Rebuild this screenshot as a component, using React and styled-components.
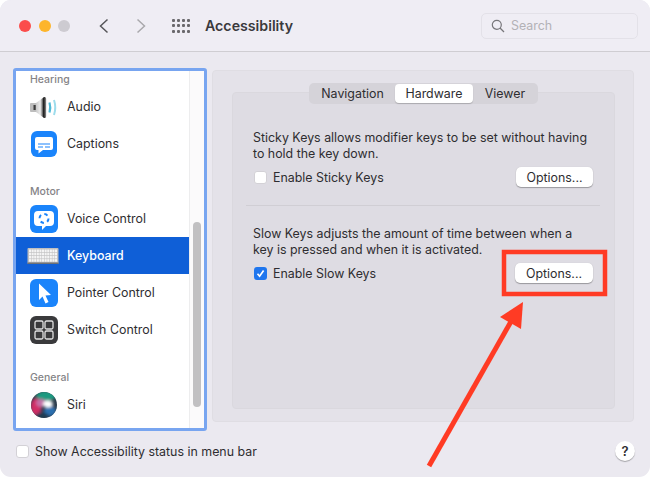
import React from "react";
import styled, { createGlobalStyle } from "styled-components";

const GlobalStyle = createGlobalStyle`
  html, body { margin: 0; padding: 0; background: #fff; }
  body { font-family: Inter, "Liberation Sans", sans-serif; }
`;

const MacWindow = styled.div`
  position: relative;
  width: 650px;
  height: 477px;
  background: #ebe9f0;
  border-radius: 11px;
  overflow: hidden;
  color: #2e2d30;
  font-size: 12.4px;
`;

const TitleBar = styled.header`
  display: flex;
  align-items: center;
  height: 51px;
  box-sizing: content-box;
  background: #efedf4;
  border-bottom: 1px solid #cfcdd2;
  padding: 0 12px 0 19px;
`;

const Lights = styled.div`
  display: flex;
  gap: 7.5px;
  margin-right: 29px;
`;

const Light = styled.span`
  width: 12px;
  height: 12px;
  border-radius: 50%;
  background: ${p => p.$color};
`;

const NavIcon = styled.svg`
  width: 12px;
  height: 18px;
  margin-right: ${p => p.$gap}px;
`;

const GridDots = styled.div`
  display: grid;
  grid-template-columns: repeat(4, 3px);
  gap: 2.5px 2px;
  margin-right: 15px;
  span { width: 3px; height: 3px; background: #6a686c; border-radius: 1px; }
`;

const Title = styled.h1`
  margin: 0;
  flex: 1;
  font-size: 14.2px;
  font-weight: 600;
  color: #3a393c;
`;

const SearchBox = styled.div`
  display: flex;
  align-items: center;
  gap: 6px;
  width: 157px;
  height: 26px;
  box-sizing: border-box;
  padding-left: 9px;
  border: 1px solid #e3e1e8;
  border-radius: 5px;
  color: #b3b1b6;
  font-size: 12.4px;
`;

const Main = styled.main`
  display: flex;
  align-items: flex-start;
  gap: 5px;
  height: 379px;
  box-sizing: border-box;
  padding: 16px 16px 0 13px;
`;

const Sidebar = styled.nav`
  display: flex;
  width: 194px;
  height: 363px;
  box-sizing: border-box;
  border: 3px solid #78a5f0;
  border-radius: 3px;
  background: #fff;
  overflow: hidden;
`;

const SidebarList = styled.div`
  width: 173px;
  padding-top: 1px;
`;

const GroupHeading = styled.div`
  height: 16px;
  line-height: 16px;
  margin-top: ${p => p.$first ? 0 : 22}px;
  padding-left: 14px;
  font-size: 10.5px;
  font-weight: 500;
  color: #858487;
`;

const Row = styled.div`
  display: flex;
  align-items: center;
  height: 37px;
  padding-left: 13px;
  gap: 8px;
  background: ${p => p.$selected ? "#0f5fd7" : "transparent"};
  color: ${p => p.$selected ? "#fff" : "#2e2d30"};
  font-weight: ${p => p.$selected ? 500 : 400};
  svg { width: 30px; height: 30px; flex: none; }
`;

const Gutter = styled.div`
  flex: 1;
  background: #fbfafb;
  border-left: 1px solid #ededee;
  padding: 151px 3px 0 3px;
`;

const Thumb = styled.div`
  height: 185px;
  border-radius: 4px;
  background: #c1c0c2;
`;

const Pane = styled.section`
  display: flex;
  flex-direction: column;
  align-items: center;
  width: 422px;
  height: 352px;
  margin-top: 2px;
  box-sizing: border-box;
  padding: 12px 18px 12px 19px;
  background: #e4e2e9;
  border: 1px solid #dfdde3;
  border-radius: 4px;
`;

const Tabs = styled.div`
  position: relative;
  z-index: 1;
  display: flex;
  height: 21px;
  box-sizing: border-box;
  padding: 1px;
  background: #d5d3d9;
  border-radius: 5px;
`;

const Tab = styled.div`
  display: flex;
  align-items: center;
  justify-content: center;
  width: ${p => p.$width}px;
  border-radius: 4px;
  background: ${p => p.$active ? "#fff" : "transparent"};
  box-shadow: ${p => p.$active ? "0 1px 1px rgba(0,0,0,.2)" : "none"};
`;

const InnerPane = styled.div`
  align-self: stretch;
  flex: 1;
  margin-top: -12px;
  padding: 37px 14px 0 13px;
  background: #dedce3;
  border: 1px solid #dad8de;
  border-radius: 4px;
`;

const Group = styled.div`
  padding: 0 7px;
`;

const Description = styled.p`
  margin: 0;
  line-height: 16px;
  white-space: nowrap;
`;

const OptionRow = styled.div`
  display: flex;
  align-items: center;
  justify-content: space-between;
  height: 20px;
  margin-top: 5px;
`;

const CheckLabel = styled.label`
  display: flex;
  align-items: center;
  gap: 6px;
  white-space: nowrap;
`;

const Box = styled.span`
  display: flex;
  align-items: center;
  justify-content: center;
  width: 13px;
  height: 13px;
  box-sizing: border-box;
  border-radius: 3px;
  margin-left: 1px;
  background: ${p => p.$checked ? "#1f76ee" : "#fff"};
  border: ${p => p.$checked ? "none" : "1px solid #d3d1d6"};
`;

const OptionsButton = styled.button`
  width: ${p => p.$width}px;
  height: 20px;
  padding: 0;
  border: none;
  border-radius: 5px;
  background: #fff;
  box-shadow: 0 1px 1px rgba(0,0,0,.3), 0 0 1px rgba(0,0,0,.15);
  font: inherit;
  color: #2e2d30;
`;

const Divider = styled.hr`
  margin: 18px 0 20px;
  border: none;
  border-top: 1px solid #d0ced4;
`;

const Footer = styled.footer`
  display: flex;
  align-items: center;
  justify-content: space-between;
  height: 24px;
  margin-top: 8px;
  padding: 0 15px;
`;

const HelpButton = styled.button`
  width: 20px;
  height: 20px;
  padding: 0;
  border: none;
  border-radius: 50%;
  background: #fff;
  box-shadow: 0 1px 1px rgba(0,0,0,.3);
  font: 600 13px Inter, sans-serif;
  color: #2e2d30;
`;

const Annotation = styled.svg`
  position: absolute;
  inset: 0;
  width: 650px;
  height: 477px;
  pointer-events: none;
`;

const AudioIcon = () => (
  <svg viewBox="0 0 30 30">
    <defs>
      <linearGradient id="cone" x1="0" x2="1" y1="0" y2="0">
        <stop offset="0" stopColor="#c8c8c8" />
        <stop offset=".4" stopColor="#ececec" />
        <stop offset=".58" stopColor="#8c8c8c" />
        <stop offset=".72" stopColor="#1e1e1e" />
        <stop offset=".88" stopColor="#555" />
        <stop offset="1" stopColor="#dcdcdc" />
      </linearGradient>
    </defs>
    <rect x="1" y="11" width="7" height="9" rx="1" fill="#bdbdbd" />
    <rect x="4.500" y="13" width="2.200" height="5" fill="#3c3c3c" />
    <path d="M7 11 L15 5 Q17.500 4.500 17.500 7.500 L17.500 23.500 Q17.500 26.500 15 26 L7 20 Z" fill="url(#cone)" />
    <path d="M20.500 10.500 Q22 15.500 20.500 20.500" fill="none" stroke="#4fb9d6" strokeWidth="2.200" />
    <path d="M25 8 Q27.500 15.500 25 23" fill="none" stroke="#9ddcec" strokeWidth="2" />
  </svg>
);

const CaptionsIcon = () => (
  <svg viewBox="0 0 30 30">
    <rect x="2" y="2" width="26" height="26" rx="6" fill="#1a84fb" />
    <path d="M8 8 H22 Q24 8 24 10 V19 Q24 21 22 21 H14 L9.500 24.500 V21 H8 Q6 21 6 19 V10 Q6 8 8 8 Z" fill="#fff" />
    <path d="M9 15 H21 M9 18 H14 M16 18 H21" stroke="#1a84fb" strokeWidth="1.200" />
  </svg>
);

const VoiceControlIcon = () => (
  <svg viewBox="0 0 30 30">
    <rect x="1" y="1" width="28" height="28" rx="6" fill="#1a84fb" />
    <path d="M9 7 H21 Q25 7 25 11 V18 Q25 22 21 22 H17 L13 26 V22 H9 Q5 22 5 18 V11 Q5 7 9 7 Z" fill="#fff" />
    <circle cx="15" cy="14.500" r="4.500" fill="none" stroke="#1a84fb" strokeWidth="2" strokeDasharray="3.500 3.500" />
  </svg>
);

const keyRows = [0, 1, 2, 3];
const keyCols = Array.from({ length: 11 }, (_, i) => i);

const KeyboardIcon = () => (
  <svg viewBox="0 0 32 16" style={{ width: 32, height: 16, marginLeft: -2 }}>
    <rect x="0.500" y="0" width="31" height="16" rx="1" fill="#bfbfc0" />
    <rect x="0.500" y="14.500" width="31" height="1.500" fill="#6f7175" />
    {keyRows.map(r => keyCols.map(c => (
      <rect key={`${r}-${c}`} x={2 + c * 2.6} y={1.500 + r * 3.200} width="2.100" height="2.600" fill="#f4f4f4" />
    )))}
  </svg>
);

const PointerIcon = () => (
  <svg viewBox="0 0 30 30">
    <rect x="1" y="1" width="28" height="28" rx="6" fill="#1a84fb" />
    <path d="M10 5.500 L22 17 L16.500 17.500 L19.500 24 L16.500 25.500 L13.500 18.500 L10 22 Z" fill="#fff" />
  </svg>
);

const SwitchIcon = () => (
  <svg viewBox="0 0 30 30">
    <rect x="1" y="1" width="28" height="28" rx="6" fill="#3a3a3c" />
    <g fill="none" stroke="#e0e0e0" strokeWidth="1.300">
      <rect x="6" y="6" width="8" height="8" rx="1.500" />
      <rect x="16" y="6" width="8" height="8" rx="1.500" />
      <rect x="6" y="16" width="8" height="8" rx="1.500" />
      <rect x="16" y="16" width="8" height="8" rx="1.500" />
    </g>
  </svg>
);

const SiriIcon = () => (
  <svg viewBox="0 0 30 30">
    <defs>
      <filter id="siriBlur"><feGaussianBlur stdDeviation="1.600" /></filter>
      <clipPath id="siriClip"><circle cx="15" cy="15" r="13" /></clipPath>
    </defs>
    <circle cx="15" cy="15" r="13" fill="#2a3a4a" />
    <g clipPath="url(#siriClip)" filter="url(#siriBlur)">
      <ellipse cx="17" cy="6" rx="10" ry="5" fill="#1f9a80" />
      <ellipse cx="7" cy="17" rx="5.500" ry="9" fill="#d12f66" />
      <ellipse cx="12" cy="13" rx="5" ry="4" fill="#c46fa8" />
      <ellipse cx="21" cy="21" rx="6" ry="5" fill="#2a6fb0" />
      <ellipse cx="13" cy="25" rx="6" ry="2.500" fill="#1d3b52" />
      <ellipse cx="19" cy="14" rx="5" ry="3.500" fill="#ffffff" />
    </g>
  </svg>
);

const sections = [
  { heading: "Hearing", rows: [["Audio", AudioIcon], ["Captions", CaptionsIcon]] },
  {
    heading: "Motor",
    rows: [
      ["Voice Control", VoiceControlIcon],
      ["Keyboard", KeyboardIcon],
      ["Pointer Control", PointerIcon],
      ["Switch Control", SwitchIcon],
    ],
  },
  { heading: "General", rows: [["Siri", SiriIcon]] },
];

const Check = ({ checked, children }) => (
  <CheckLabel>
    <Box $checked={checked}>
      {checked && (
        <svg width="11" height="11" viewBox="0 0 11 11">
          <path d="M2.500 5.800 L4.600 8.200 L8.600 2.600" fill="none" stroke="#fff" strokeWidth="1.700" />
        </svg>
      )}
    </Box>
    {children}
  </CheckLabel>
);

export default function App() {
  return (
    <MacWindow>
      <GlobalStyle />
      <TitleBar>
        <Lights>
          <Light $color="#fb4d4b" />
          <Light $color="#fdb52b" />
          <Light $color="#cdcbd1" />
        </Lights>
        <NavIcon $gap={25} viewBox="0 0 12 18">
          <path d="M8.500 2.500 L1.500 9 L8.500 15.500" fill="none" stroke="#57565a" strokeWidth="1.500" />
        </NavIcon>
        <NavIcon $gap={24} viewBox="0 0 12 18">
          <path d="M1.500 2.500 L8.500 9 L1.500 15.500" fill="none" stroke="#a9a8ac" strokeWidth="1.500" />
        </NavIcon>
        <GridDots>
          {Array.from({ length: 12 }, (_, i) => <span key={i} />)}
        </GridDots>
        <Title>Accessibility</Title>
        <SearchBox>
          <svg width="14" height="14" viewBox="0 0 14 14">
            <circle cx="5.800" cy="5.800" r="4.500" fill="none" stroke="#77767a" strokeWidth="1.200" />
            <path d="M9 9 L13 13" stroke="#77767a" strokeWidth="1.300" />
          </svg>
          Search
        </SearchBox>
      </TitleBar>

      <Main>
        <Sidebar>
          <SidebarList>
            {sections.map((s, i) => (
              <React.Fragment key={s.heading}>
                <GroupHeading $first={i === 0}>{s.heading}</GroupHeading>
                {s.rows.map(([label, Icon]) => (
                  <Row key={label} $selected={label === "Keyboard"}>
                    <Icon />
                    {label}
                  </Row>
                ))}
              </React.Fragment>
            ))}
          </SidebarList>
          <Gutter><Thumb /></Gutter>
        </Sidebar>

        <Pane>
          <Tabs>
            <Tab $width={85}>Navigation</Tab>
            <Tab $width={78} $active>Hardware</Tab>
            <Tab $width={64}>Viewer</Tab>
          </Tabs>
          <InnerPane>
            <Group>
              <Description>
                Sticky Keys allows modifier keys to be set without having<br />
                to hold the key down.
              </Description>
              <OptionRow>
                <Check>Enable Sticky Keys</Check>
                <OptionsButton $width={77}>Options...</OptionsButton>
              </OptionRow>
            </Group>
            <Divider />
            <Group>
              <Description>
                Slow Keys adjusts the amount of time between when a<br />
                key is pressed and when it is activated.
              </Description>
              <OptionRow>
                <Check checked>Enable Slow Keys</Check>
                <OptionsButton $width={78}>Options...</OptionsButton>
              </OptionRow>
            </Group>
          </InnerPane>
        </Pane>
      </Main>

      <Footer>
        <Check>Show Accessibility status in menu bar</Check>
        <HelpButton>?</HelpButton>
      </Footer>

      <Annotation viewBox="0 0 650 477">
        <rect x="504" y="252" width="101" height="42" fill="none" stroke="#ff3b24" strokeWidth="4.500" />
        <path d="M429 466 L513 318" stroke="#ff3b24" strokeWidth="5" />
        <path d="M523 302 L500 317 L521 329 Z" fill="#ff3b24" />
      </Annotation>
    </MacWindow>
  );
}
